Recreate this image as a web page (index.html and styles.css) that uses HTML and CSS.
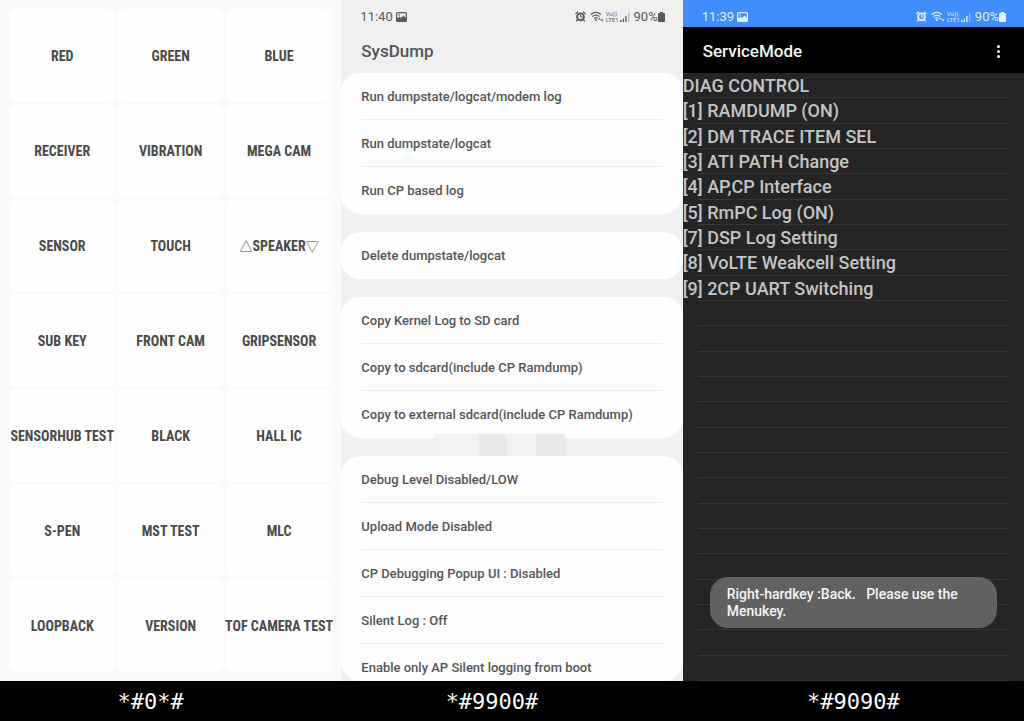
FILE: index.html
```
<!DOCTYPE html>
<html lang="en">
<head>
  <meta charset="UTF-8">
  <meta name="viewport" content="width=device-width, initial-scale=1.0">
  <title>Secret codes</title>
  <link rel="stylesheet" href="styles.css">
</head>
<body>

<!-- shared status bar icons -->
<svg class="sprite" aria-hidden="true">
  <symbol id="picture" viewBox="0 0 11 10">
    <path fill="currentColor" fill-rule="evenodd" d="M1.5 0h8A1.5 1.5 0 0 1 11 1.500v7A1.500 1.500 0 0 1 9.500 10h-8A1.500 1.500 0 0 1 0 8.500v-7A1.500 1.500 0 0 1 1.500 0zM1.300 1.300v5.200l2.200-2 1.800 1.600 2-2.600 2.400 2.400V1.300zM2.500 2.300h1.500v1.300H2.500z"/>
  </symbol>
  <symbol id="alarm" viewBox="0 0 11 11">
    <circle cx="5.500" cy="5.800" r="3.400" stroke="currentColor" stroke-width="1.900" fill="none"/>
    <path stroke="currentColor" stroke-width="1.500" fill="none" d="M.5 3L3 .8M10.500 3L8 .8M2.600 8.600L1.200 10.400M8.400 8.600l1.400 1.800"/>
    <path stroke="currentColor" fill="none" d="M5.500 3.500v2.500h2"/>
  </symbol>
  <symbol id="wifi" viewBox="0 0 14 11">
    <path stroke="currentColor" stroke-width="1.200" fill="none" d="M.6 3.500q5.200-4.400 10.400 0M2.300 5.500q3.500-2.900 7 0M4 7.400q1.800-1.500 3.600 0"/>
    <circle fill="currentColor" cx="5.800" cy="8.900" r="1"/>
    <path fill="currentColor" d="M9.500 6.500l1.500 2H8zM12 10.500l-1.500-2h3z"/>
  </symbol>
  <symbol id="signal" viewBox="0 0 10 10">
    <path fill="currentColor" d="M0 8h1.400v2H0zM2.600 6.500H4V10H2.600zM5.200 4h1.400v6H5.200z"/>
    <path fill="currentColor" opacity=".4" d="M8 1h1.400v9H8z"/>
  </symbol>
  <symbol id="battery" viewBox="0 0 7 10">
    <path fill="currentColor" d="M2 0h3v1h1a1 1 0 0 1 1 1v7a1 1 0 0 1-1 1H1a1 1 0 0 1-1-1V2a1 1 0 0 1 1-1h1z"/>
  </symbol>
</svg>

<main class="phones">

  <section class="phone">
    <div class="screen tests">
      <button>RED</button>
      <button>GREEN</button>
      <button>BLUE</button>
      <button>RECEIVER</button>
      <button>VIBRATION</button>
      <button>MEGA CAM</button>
      <button>SENSOR</button>
      <button>TOUCH</button>
      <button><span class="arrow">△</span>SPEAKER<span class="arrow">▽</span></button>
      <button>SUB KEY</button>
      <button>FRONT CAM</button>
      <button>GRIPSENSOR</button>
      <button>SENSORHUB TEST</button>
      <button>BLACK</button>
      <button>HALL IC</button>
      <button>S-PEN</button>
      <button>MST TEST</button>
      <button>MLC</button>
      <button>LOOPBACK</button>
      <button>VERSION</button>
      <button>TOF CAMERA TEST</button>
    </div>
    <h2 class="code code-left">*#0*#</h2>
  </section>

  <section class="phone">
    <div class="screen sysdump">
      <div class="status">
        <span class="time">11:40</span>
        <svg class="picture"><use href="#picture"/></svg>
        <svg class="alarm"><use href="#alarm"/></svg>
        <svg class="wifi"><use href="#wifi"/></svg>
        <span class="volte">Vo))<br>LTE1</span>
        <svg class="signal"><use href="#signal"/></svg>
        <span class="percent">90%</span>
        <svg class="battery"><use href="#battery"/></svg>
      </div>
      <h1 class="title">SysDump</h1>
      <div class="cards">
        <div class="card">
          <button>Run dumpstate/logcat/modem log</button>
          <button>Run dumpstate/logcat</button>
          <button>Run CP based log</button>
        </div>
        <div class="card">
          <button>Delete dumpstate/logcat</button>
        </div>
        <div class="card marked">
          <button>Copy Kernel Log to SD card</button>
          <button>Copy to sdcard(include CP Ramdump)</button>
          <button>Copy to external sdcard(include CP Ramdump)</button>
          <div class="smudge"><i></i><i></i><i></i><i></i></div>
        </div>
        <div class="card last">
          <button>Debug Level Disabled/LOW</button>
          <button>Upload Mode Disabled</button>
          <button>CP Debugging Popup UI : Disabled</button>
          <button>Silent Log : Off</button>
          <button>Enable only AP Silent logging from boot</button>
        </div>
      </div>
    </div>
    <h2 class="code code-left">*#9900#</h2>
  </section>

  <section class="phone">
    <div class="screen service">
      <div class="status">
        <span class="time">11:39</span>
        <svg class="picture"><use href="#picture"/></svg>
        <svg class="alarm"><use href="#alarm"/></svg>
        <svg class="wifi"><use href="#wifi"/></svg>
        <span class="volte">Vo))<br>LTE1</span>
        <svg class="signal"><use href="#signal"/></svg>
        <span class="percent">90%</span>
        <svg class="battery"><use href="#battery"/></svg>
      </div>
      <div class="appbar">
        <h1 class="title">ServiceMode</h1>
        <button class="more" aria-label="More options"><i></i><i></i><i></i></button>
      </div>
      <ul class="lines">
        <li>DIAG CONTROL</li>
        <li>[1] RAMDUMP (ON)</li>
        <li>[2] DM TRACE ITEM SEL</li>
        <li>[3] ATI PATH Change</li>
        <li>[4] AP,CP Interface</li>
        <li>[5] RmPC Log (ON)</li>
        <li>[7] DSP Log Setting</li>
        <li>[8] VoLTE Weakcell Setting</li>
        <li>[9] 2CP UART Switching</li>
        <li></li><li></li><li></li><li></li><li></li>
        <li></li><li></li><li></li><li></li><li></li>
        <li></li><li></li><li></li><li></li><li></li>
      </ul>
      <div class="toast">Right-hardkey :Back. &nbsp; Please use the Menukey.</div>
    </div>
    <h2 class="code">*#9090#</h2>
  </section>

</main>

</body>
</html>
```
FILE: styles.css
```
* {
  box-sizing: border-box;
}

body {
  margin: 0;
  background-color: #000;
  font-family: Roboto, sans-serif;
}

button {
  border: none;
  margin: 0;
  cursor: pointer;
}

h1, h2, ul {
  margin: 0;
  padding: 0;
}

.sprite {
  display: none;
}

.phones {
  display: grid;
  grid-template-columns: repeat(3, minmax(0, 1fr));
  height: 100vh;
}

.phone {
  display: flex;
  flex-direction: column;
  min-height: 0;
}

.screen {
  flex: 1;
  min-height: 0;
  overflow: hidden;
}

.code {
  height: 40px;
  line-height: 42px;
  color: #fff;
  font-family: "DejaVu Sans Mono", monospace;
  font-size: 22px;
  font-weight: normal;
  text-align: center;
}

.code-left {
  padding-right: 40px;
}

/* hardware test grid */
.tests {
  display: grid;
  grid-template-columns: repeat(3, minmax(0, 1fr));
  grid-auto-rows: 1fr;
  gap: 2px;
  padding: 9px;
  background-color: #f9f9f9;
}

.tests button {
  display: flex;
  align-items: center;
  justify-content: center;
  padding: 0;
  border-radius: 8px;
  background-color: #fefefe;
  color: #4a4a4a;
  font-family: "Roboto Condensed", "Liberation Sans Narrow", Roboto, sans-serif;
  font-size: 14px;
  font-weight: bold;
  white-space: nowrap;
}

.arrow {
  font-family: "Noto Sans CJK JP", sans-serif;
  font-size: 13px;
  font-weight: normal;
}

/* status bar */
.status {
  flex: none;
  display: flex;
  align-items: center;
  height: 27px;
  padding: 6px 18px 0 19px;
  color: #5a5a5a;
  font-size: 13px;
}

.picture {
  width: 11px;
  height: 10px;
  margin-left: 3px;
}

.alarm {
  width: 11px;
  height: 11px;
  margin-left: auto;
}

.wifi {
  width: 14px;
  height: 11px;
  margin-left: 4px;
}

.volte {
  margin-left: 2px;
  font-size: 6px;
  line-height: 6px;
}

.signal {
  width: 10px;
  height: 10px;
  margin: 0 4px 0 1px;
}

.battery {
  width: 7px;
  height: 10px;
}

.title {
  font-size: 17px;
  font-weight: 500;
}

/* SysDump */
.sysdump {
  display: flex;
  flex-direction: column;
  background-color: #f0f0f0;
}

.sysdump .title {
  flex: none;
  height: 46px;
  padding-left: 20px;
  line-height: 48px;
  color: #555;
}

.cards {
  flex: 1;
  display: flex;
  flex-direction: column;
  gap: 18px;
  min-height: 0;
}

.card {
  flex: none;
  padding: 0 20px;
  border-radius: 20px;
  background-color: #fdfdfd;
}

.card button {
  display: block;
  width: 100%;
  height: 47px;
  padding: 0;
  border-bottom: 1px solid #ececec;
  background: none;
  color: #555;
  font-family: inherit;
  font-size: 13px;
  font-weight: 500;
  text-align: left;
}

.card button:last-of-type {
  border-bottom-color: transparent;
}

.card.last {
  flex: 1;
  min-height: 0;
  overflow: hidden;
}

.marked {
  position: relative;
}

.smudge {
  position: absolute;
  left: 94px;
  bottom: -18px;
  display: flex;
  width: 130px;
  height: 22px;
}

.smudge i {
  flex: 1;
  background-color: #f2f2f2;
}

.smudge i:first-child {
  flex: 0 0 43px;
}

.smudge i:nth-child(even) {
  background-color: #eaeaea;
}

/* ServiceMode */
.service {
  position: relative;
  display: flex;
  flex-direction: column;
  background-color: #252525;
}

.service .status {
  background-color: #3f8efc;
  color: #e4efff;
}

.appbar {
  flex: none;
  display: flex;
  align-items: center;
  justify-content: space-between;
  height: 46px;
  padding: 2px 20px 0;
  background-color: #000;
  color: #f5f5f5;
}

.more {
  display: flex;
  flex-direction: column;
  gap: 2px;
  padding: 4px;
  background: none;
}

.more i {
  width: 3px;
  height: 3px;
  border-radius: 50%;
  background-color: #fff;
}

.lines {
  flex: 1;
  display: grid;
  grid-template-rows: repeat(24, minmax(0, 1fr));
  min-height: 0;
  list-style: none;
  color: #c4c4c4;
  font-size: 18px;
  font-weight: 500;
  line-height: 26px;
}

.lines li {
  background: linear-gradient(#363636, #363636) 15px bottom / calc(100% - 30px) 1px no-repeat;
}

.toast {
  position: absolute;
  left: 27px;
  right: 27px;
  bottom: 53px;
  padding: 9px 17px 8px;
  border-radius: 18px;
  background-color: #616161;
  color: #f5f5f5;
  font-size: 14px;
  font-weight: 500;
  line-height: 17px;
}
```
